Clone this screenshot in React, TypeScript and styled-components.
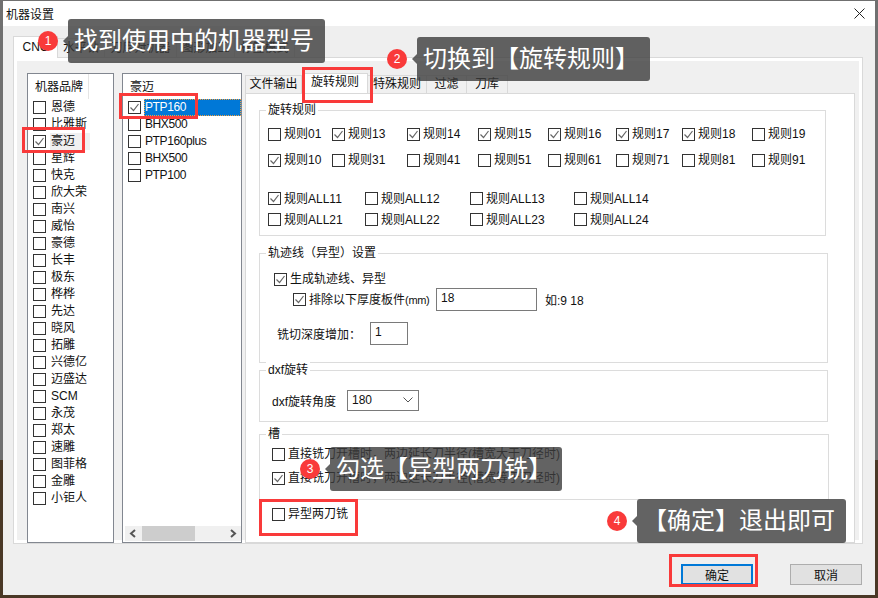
import React from 'react';
import styled, { createGlobalStyle } from 'styled-components';

const GlobalStyle = createGlobalStyle`
  html, body {
    margin: 0;
    padding: 0;
    height: 598px;
    overflow: hidden;
    background: linear-gradient(#707070 0 460px, #4a3826 460px);
  }
  * { box-sizing: border-box; }
  body {
    font-family: "Liberation Sans", "Noto Sans CJK SC", sans-serif;
    font-size: 12px;
    color: #111;
  }
`;

const Page = styled.div`
  position: relative;
  width: 878px;
  height: 598px;
  padding: 1px 0 0 3px;
`;

const Window = styled.div`
  width: 872px;
  height: 594px;
  background: #efefef;
  display: flex;
  flex-direction: column;
`;

const TitleBar = styled.div`
  height: 25px;
  flex: none;
  background: #fff;
  display: flex;
  align-items: center;
  justify-content: space-between;
  padding: 0 10px 0 3px;
  font-size: 12px;
`;

const Content = styled.div`
  flex: 1;
  padding: 10px 0 0 10px;
  display: flex;
  flex-direction: column;
`;

const TabStrip = styled.div`
  display: flex;
  height: 21px;
  flex: none;
`;

const OuterTab = styled.div<{ $active?: boolean; $w: number }>`
  width: ${p => p.$w}px;
  height: ${p => (p.$active ? 22 : 20)}px;
  margin-top: ${p => (p.$active ? 0 : 2)}px;
  padding-top: ${p => (p.$active ? 2 : 1)}px;
  text-align: center;
  line-height: 17px;
  white-space: nowrap;
  background: ${p => (p.$active ? '#fff' : '#f0f0f0')};
  border: 1px solid #d9d9d9;
  border-left-width: ${p => (p.$active ? 1 : 0)}px;
  border-bottom-width: ${p => (p.$active ? 0 : 1)}px;
  position: relative;
  z-index: ${p => (p.$active ? 1 : 0)};
`;

const OuterPane = styled.div`
  width: 850px;
  height: 487px;
  border: 1px solid #d9d9d9;
  box-shadow: inset 0 0 0 3px #fff;
  border-top-width: 1px;
  background: #f0f0f0;
  padding: 15px 0 0 13px;
  display: flex;
  align-items: flex-start;
`;

const ListBox = styled.div<{ $w: number }>`
  width: ${p => p.$w}px;
  height: 470px;
  flex: none;
  background: #fff;
  border: 1px solid #828790;
  margin-right: 8px;
  display: flex;
  flex-direction: column;
`;

const ListHeader = styled.div<{ $divider?: boolean }>`
  height: 25px;
  flex: none;
  width: ${p => (p.$divider ? '61px' : '100%')};
  padding: 5px 0 0 7px;
  line-height: 16px;
  border-right: ${p => (p.$divider ? '1px solid #e5e5e5' : '0')};
`;

const ListRow = styled.div<{ $gap: number }>`
  height: 17px;
  flex: none;
  display: flex;
  align-items: center;
  padding-left: 5px;
  gap: ${p => p.$gap}px;
  white-space: nowrap;
`;

const RowLabel = styled.span<{ $tone?: 'hover' | 'selected'; $tight?: boolean }>`
  display: block;
  height: 17px;
  line-height: 17px;
  padding: 0 1px;
  letter-spacing: ${p => (p.$tight ? '-0.4px' : '0')};
  background: ${p => (p.$tone === 'hover' ? '#f0f0f0' : p.$tone === 'selected' ? '#0078d7' : 'transparent')};
  color: ${p => (p.$tone === 'selected' ? '#fff' : 'inherit')};
  outline: ${p => (p.$tone === 'selected' ? '1px dotted #f0a040' : '0')};
  outline-offset: -1px;
  flex: ${p => (p.$tone === 'selected' ? 1 : 'none')};
  margin-right: ${p => (p.$tone === 'selected' ? '0' : 'auto')};
  min-width: ${p => (p.$tone === 'hover' ? '40px' : '0')};
`;

const ScrollBar = styled.div`
  margin: auto 0 1px 2px;
  height: 15px;
  width: 116px;
  background: #f0f0f0;
  display: flex;
  align-items: center;
  justify-content: space-between;
  padding: 0 4px;
  position: relative;
  flex: none;
`;

const ScrollThumb = styled.div`
  position: absolute;
  left: 17px;
  top: 0;
  width: 53px;
  height: 15px;
  background: #cdcdcd;
`;

const RightColumn = styled.div`
  margin: 2px 0 0 -5px;
  width: 610px;
  flex: none;
  display: flex;
  flex-direction: column;
`;

const InnerStrip = styled.div`
  display: flex;
  height: 18px;
  flex: none;
`;

const InnerTab = styled.div<{ $w: number; $active?: boolean }>`
  width: ${p => p.$w}px;
  height: ${p => (p.$active ? 20 : 18)}px;
  margin-top: ${p => (p.$active ? -2 : 0)}px;
  text-align: center;
  line-height: 16px;
  background: ${p => (p.$active ? '#fff' : '#f0f0f0')};
  border: 1px solid #d9d9d9;
  border-left-width: ${p => (p.$active ? 1 : 0)}px;
  border-bottom-width: 0;
  position: relative;
  z-index: ${p => (p.$active ? 1 : 0)};
  &:first-child { border-left-width: 1px; }
`;

const RulePane = styled.div`
  height: 450px;
  background: #fff;
  border: 1px solid #d9d9d9;
  padding: 16px 0 0 13px;
  display: flex;
  flex-direction: column;
`;

const Group = styled.div<{ $w: number; $h: number; $gap: number }>`
  position: relative;
  width: ${p => p.$w}px;
  height: ${p => p.$h}px;
  margin-top: ${p => p.$gap}px;
  flex: none;
  border: 1px solid #dcdcdc;
`;

const Legend = styled.span`
  position: absolute;
  left: 6px;
  top: -9px;
  padding: 0 2px;
  line-height: 16px;
  background: #fff;
`;

const RuleGrid = styled.div<{ $cols: string; $rowH: number; $top: number }>`
  display: grid;
  grid-template-columns: ${p => p.$cols};
  grid-auto-rows: ${p => p.$rowH}px;
  align-items: center;
  padding: ${p => p.$top}px 0 0 8px;
`;

const CheckLine = styled.label`
  display: flex;
  align-items: center;
  gap: 3px;
  white-space: nowrap;
  line-height: 16px;
`;

const ThicknessLabel = styled(CheckLine)`
  width: 143px;
  flex: none;
`;

const MmUnit = styled.small`
  font-size: 11px;
  letter-spacing: -0.3px;
`;

const Box = styled.span`
  width: 13px;
  height: 13px;
  flex: none;
  display: block;
  background: #fff;
  border: 1px solid #333;
`;

const TrajectoryBody = styled.div`
  display: flex;
  flex-direction: column;
  padding: 17px 0 0 14px;
`;

const ThicknessRow = styled.div`
  display: flex;
  align-items: center;
  height: 23px;
  margin: 1px 0 0 19px;
`;

const TextField = styled.div<{ $w: number }>`
  width: ${p => p.$w}px;
  height: 23px;
  flex: none;
  border: 1px solid #7a7a7a;
  background: #fff;
  padding: 0 0 3px 4px;
  display: flex;
  align-items: center;
`;

const Hint = styled.span`
  margin-left: 8px;
`;

const DepthRow = styled.div`
  display: flex;
  align-items: center;
  margin: 11px 0 0 3px;
  gap: 4px;
  height: 23px;
`;

const DepthLabel = styled.span`
  width: 89px;
`;

const DxfRow = styled.div`
  display: flex;
  align-items: center;
  height: 21px;
  margin: 19px 0 0 12px;
`;

const DxfLabel = styled.span`
  width: 75px;
`;

const SelectBox = styled.div`
  width: 72px;
  height: 21px;
  border: 1px solid #7a7a7a;
  padding: 0 5px 2px 4px;
  display: flex;
  align-items: center;
  justify-content: space-between;
`;

const SlotBody = styled.div`
  display: flex;
  flex-direction: column;
  gap: 8px;
  padding: 11px 0 0 12px;
`;

const SlotLine = styled.div`
  height: 16px;
`;

const FootCheck = styled.div`
  margin: 6px 0 0 13px;
`;

const ButtonBar = styled.div`
  display: flex;
  padding: 20px 0 0 668px;
  gap: 37px;
`;

const DialogButton = styled.button<{ $primary?: boolean }>`
  width: 72px;
  height: 21px;
  padding: 0;
  font: inherit;
  color: #111;
  background: #e1e1e1;
  border: ${p => (p.$primary ? '2px solid #0078d7' : '1px solid #adadad')};
`;

const RedFrame = styled.div<{ $x: number; $y: number; $w: number; $h: number }>`
  position: absolute;
  left: ${p => p.$x}px;
  top: ${p => p.$y}px;
  width: ${p => p.$w}px;
  height: ${p => p.$h}px;
  border: 3px solid #f93a3a;
  z-index: 5;
`;

const Callout = styled.div<{ $x: number; $y: number; $w: number }>`
  position: absolute;
  left: ${p => p.$x}px;
  top: ${p => p.$y}px;
  width: ${p => p.$w}px;
  height: 44px;
  display: flex;
  align-items: center;
  z-index: 6;
`;

const Badge = styled.span`
  width: 20px;
  height: 20px;
  flex: none;
  border-radius: 50%;
  background: #f93a3a;
  color: #fff;
  font-size: 12px;
  line-height: 20px;
  text-align: center;
`;

const Bubble = styled.div`
  position: relative;
  margin-left: 10px;
  flex: 1;
  height: 44px;
  border-radius: 3px;
  background: rgba(60, 60, 60, 0.8);
  color: #fff;
  font-size: 24px;
  line-height: 43px;
  padding-left: 6px;
  white-space: nowrap;
  &::before {
    content: '';
    position: absolute;
    left: -5px;
    top: 17px;
    border-style: solid;
    border-width: 5px 5px 5px 0;
    border-color: transparent rgba(60, 60, 60, 0.8) transparent transparent;
  }
`;

const CheckMark = () => (
  <svg width="11" height="11" viewBox="0 0 11 11" fill="none" style={{ display: 'block' }}>
    <path d="M1.5 5.5 L4.5 8.5 L9.5 2" stroke="#666" strokeWidth="1.2" />
  </svg>
);

const Check: React.FC<{ on?: boolean }> = ({ on }) => <Box>{on && <CheckMark />}</Box>;

const brands = [
  '恩德', '比雅斯', '豪迈', '星辉', '快克', '欣大荣', '南兴', '威怡', '豪德', '长丰', '极东', '桦桦',
  '先达', '晓风', '拓雕', '兴德亿', '迈盛达', 'SCM', '永茂', '郑太', '速雕', '图菲格', '金雕', '小钜人',
];

const models = ['PTP160', 'BHX500', 'PTP160plus', 'BHX500', 'PTP100'];

const ruleRows: [string, boolean][] = [
  ['规则01', false], ['规则13', true], ['规则14', true], ['规则15', true],
  ['规则16', true], ['规则17', true], ['规则18', true], ['规则19', false],
  ['规则10', true], ['规则31', false], ['规则41', false], ['规则51', false],
  ['规则61', false], ['规则71', false], ['规则81', false], ['规则91', false],
];

const allRows: [string, boolean][] = [
  ['规则ALL11', true], ['规则ALL12', false], ['规则ALL13', false], ['规则ALL14', false],
  ['规则ALL21', false], ['规则ALL22', false], ['规则ALL23', false], ['规则ALL24', false],
];

const App: React.FC = () => {
  return (
    <Page>
      <GlobalStyle />
      <Window>
        <TitleBar>
          <span>机器设置</span>
          <svg width="11" height="11" viewBox="0 0 11 11">
            <path d="M0.5 0.5 L10.5 10.5 M10.5 0.5 L0.5 10.5" stroke="#222" strokeWidth="1" />
          </svg>
        </TitleBar>
        <Content>
          <TabStrip>
            <OuterTab $active $w={45}>CNC</OuterTab>
            <OuterTab $w={47}>水平钻</OuterTab>
            <OuterTab $w={72}>刀库对机器</OuterTab>
            <OuterTab $w={58}>图形加工</OuterTab>
            <OuterTab $w={60}>标签模式</OuterTab>
          </TabStrip>
          <OuterPane>
            <ListBox $w={87}>
              <ListHeader $divider>机器品牌</ListHeader>
              {brands.map(b => (
                <ListRow key={b} $gap={4}>
                  <Check on={b === '豪迈'} />
                  <RowLabel $tone={b === '豪迈' ? 'hover' : undefined}>{b}</RowLabel>
                </ListRow>
              ))}
            </ListBox>
            <ListBox $w={120}>
              <ListHeader>豪迈</ListHeader>
              {models.map((m, i) => (
                <ListRow key={m + i} $gap={3}>
                  <Check on={i === 0} />
                  <RowLabel $tight $tone={i === 0 ? 'selected' : undefined}>{m}</RowLabel>
                </ListRow>
              ))}
              <ScrollBar>
                <ScrollThumb />
                <svg width="8" height="9" viewBox="0 0 8 9">
                  <path d="M6 1 L2 4.5 L6 8" stroke="#555" strokeWidth="2" fill="none" />
                </svg>
                <svg width="8" height="9" viewBox="0 0 8 9">
                  <path d="M2 1 L6 4.5 L2 8" stroke="#555" strokeWidth="2" fill="none" />
                </svg>
              </ScrollBar>
            </ListBox>
            <RightColumn>
              <InnerStrip>
                <InnerTab $w={57}>文件输出</InnerTab>
                <InnerTab $w={66} $active>旋转规则</InnerTab>
                <InnerTab $w={59}>特殊规则</InnerTab>
                <InnerTab $w={40}>过滤</InnerTab>
                <InnerTab $w={41}>刀库</InnerTab>
              </InnerStrip>
              <RulePane>
                <Group $w={567} $h={126} $gap={0}>
                  <Legend>旋转规则</Legend>
                  <RuleGrid $cols="64px 75px 71px 70px 68px 66px 70px 70px" $rowH={26} $top={10}>
                    {ruleRows.map(([t, on]) => (
                      <CheckLine key={t}><Check on={on} />{t}</CheckLine>
                    ))}
                  </RuleGrid>
                  <RuleGrid $cols="97px 105px 104px 104px" $rowH={21} $top={15}>
                    {allRows.map(([t, on]) => (
                      <CheckLine key={t}><Check on={on} />{t}</CheckLine>
                    ))}
                  </RuleGrid>
                </Group>
                <Group $w={569} $h={110} $gap={17}>
                  <Legend>轨迹线（异型）设置</Legend>
                  <TrajectoryBody>
                    <CheckLine><Check on />生成轨迹线、异型</CheckLine>
                    <ThicknessRow>
                      <ThicknessLabel>
                        <Check on />
                        <span>排除以下厚度板件<MmUnit>(mm)</MmUnit></span>
                      </ThicknessLabel>
                      <TextField $w={101}>18</TextField>
                      <Hint>如:9 18</Hint>
                    </ThicknessRow>
                    <DepthRow>
                      <DepthLabel>铣切深度增加：</DepthLabel>
                      <TextField $w={38}>1</TextField>
                    </DepthRow>
                  </TrajectoryBody>
                </Group>
                <Group $w={569} $h={52} $gap={7}>
                  <Legend>dxf旋转</Legend>
                  <DxfRow>
                    <DxfLabel>dxf旋转角度</DxfLabel>
                    <SelectBox>
                      180
                      <svg width="10" height="6" viewBox="0 0 10 6">
                        <path d="M0.5 0.5 L5 5 L9.5 0.5" stroke="#555" fill="none" />
                      </svg>
                    </SelectBox>
                  </DxfRow>
                </Group>
                <Group $w={570} $h={66} $gap={12}>
                  <Legend>槽</Legend>
                  <SlotBody>
                    <SlotLine><CheckLine><Check />直接铣刀开槽时，两边延长刀半径(槽宽大于刀径时)</CheckLine></SlotLine>
                    <SlotLine><CheckLine><Check on />直接铣刀开槽时，两边延长刀半径(槽宽等于刀径时)</CheckLine></SlotLine>
                  </SlotBody>
                </Group>
                <FootCheck>
                  <CheckLine><Check />异型两刀铣</CheckLine>
                </FootCheck>
              </RulePane>
            </RightColumn>
          </OuterPane>
          <ButtonBar>
            <DialogButton $primary>确定</DialogButton>
            <DialogButton>取消</DialogButton>
          </ButtonBar>
        </Content>
      </Window>

      <RedFrame $x={22} $y={127} $w={63} $h={26} />
      <RedFrame $x={119} $y={93} $w={79} $h={26} />
      <RedFrame $x={302} $y={67} $w={71} $h={36} />
      <RedFrame $x={259} $y={499} $w={99} $h={37} />
      <RedFrame $x={669} $y={554} $w={89} $h={33} />

      <Callout $x={38} $y={19} $w={287}><Badge>1</Badge><Bubble>找到使用中的机器型号</Bubble></Callout>
      <Callout $x={387} $y={37} $w={263}><Badge>2</Badge><Bubble>切换到【旋转规则】</Bubble></Callout>
      <Callout $x={300} $y={447} $w={262}><Badge>3</Badge><Bubble>勾选【异型两刀铣】</Bubble></Callout>
      <Callout $x={607} $y={499} $w={239}><Badge>4</Badge><Bubble>【确定】退出即可</Bubble></Callout>
    </Page>
  );
};

export default App;
